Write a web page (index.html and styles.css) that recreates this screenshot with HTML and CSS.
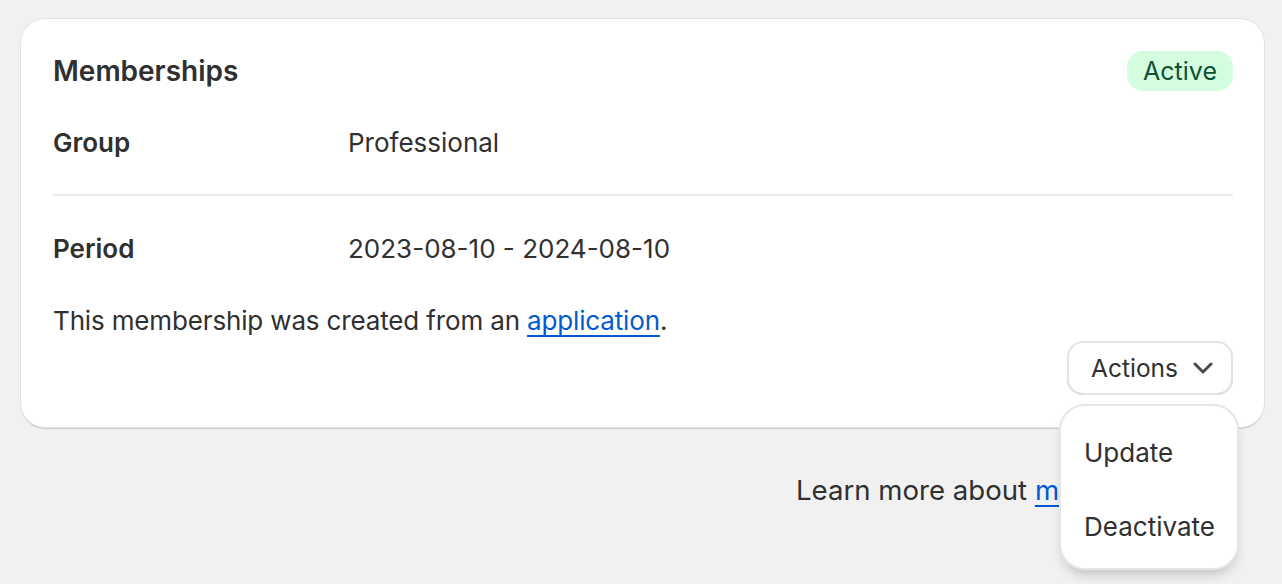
FILE: index.html
```html
<!DOCTYPE html>
<html lang="en">
<head>
<meta charset="utf-8">
<title>Memberships</title>
<link rel="stylesheet" href="styles.css">
</head>
<body>
<div class="page">
  <section class="card">
    <div class="card-header">
      <h2 class="title">Memberships</h2>
      <span class="badge">Active</span>
    </div>
    <div class="row">
      <div class="label">Group</div>
      <div class="value">Professional</div>
    </div>
    <hr class="divider">
    <div class="row">
      <div class="label">Period</div>
      <div class="value">2023-08-10 - 2024-08-10</div>
    </div>
    <p class="note">This membership was created from an <a href="#" class="link">application</a>.</p>
    <div class="actions">
      <div class="menu-wrap">
        <button class="btn" type="button">Actions
          <svg class="chev" width="20" height="12" viewBox="0 0 20 12" aria-hidden="true"><path d="M2 2 L10 10 L18 2" fill="none" stroke="#4a4a4a" stroke-width="3" stroke-linecap="round" stroke-linejoin="round"/></svg>
        </button>
        <div class="popover">
          <div class="item">Update</div>
          <div class="item">Deactivate</div>
        </div>
      </div>
    </div>
  </section>
  <p class="footer">Learn more about <a href="#" class="link">memberships</a></p>
</div>
</body>
</html>
```
FILE: styles.css
```css
* { box-sizing: border-box; }
html, body { margin: 0; padding: 0; }
body {
  background: #f1f1f1;
  font-family: Inter, "Noto Sans", "Liberation Sans", sans-serif;
  color: #303030;
  width: 1282px;
  height: 584px;
  overflow: hidden;
}
.page {
  padding: 19px 18px 0 21px;
}
.card {
  background: #fff;
  border-radius: 24px;
  padding: 32px 31px 32px 32px;
  box-shadow: 0 0 0 1px #e2e2e2, 0 2px 1px 0 rgba(0,0,0,0.16);
  display: flex;
  flex-direction: column;
}
.card-header {
  display: flex;
  justify-content: space-between;
  align-items: center;
  height: 40px;
}
.title {
  margin: 0;
  font-size: 28px;
  font-weight: 600;
  line-height: 40px;
  letter-spacing: 0;
}
.badge {
  background: #d4fde0;
  color: #0c5132;
  font-size: 25px;
  line-height: 40px;
  height: 40px;
  padding: 0 16px;
  border-radius: 16px;
  font-weight: 400;
}
.row {
  display: flex;
  align-items: center;
  margin-top: 32px;
  height: 40px;
  font-size: 26px;
  line-height: 40px;
}
.label {
  width: 295px;
  font-weight: 600;
}
.divider {
  margin: 31px 0 0 0;
  border: 0;
  height: 2px;
  background: #ebebeb;
}
.divider + .row { margin-top: 33px; }
.note {
  margin: 32px 0 0 0;
  font-size: 26px;
  line-height: 40px;
  letter-spacing: -0.15px;
}
.link {
  color: #005bd3;
  text-decoration: underline;
  text-underline-offset: 5px;
  text-decoration-thickness: 2px;
}
.actions {
  display: flex;
  justify-content: flex-end;
  margin-top: 0;
}
.menu-wrap {
  position: relative;
}
.btn {
  font-family: inherit;
  display: flex;
  align-items: center;
  gap: 15px;
  height: 54px;
  padding: 0 20px 0 24px;
  background: #fff;
  border: 0;
  border-radius: 16px;
  font-size: 24.5px;
  font-weight: 400;
  color: #303030;
  box-shadow: 0 0 0 2px #e3e3e3 inset, 0 -2px 0 0 #b5b5b5 inset;
}
.chev { display: block; }
.popover {
  position: absolute;
  top: 65px;
  right: -4px;
  width: 176px;
  background: #fff;
  border-radius: 24px;
  padding: 12px 12px 6px 12px;
  box-shadow: 0 0 0 2px #e6e6e6, 0 8px 12px -2px rgba(26,26,26,0.22);
  display: flex;
  flex-direction: column;
  gap: 4px;
  z-index: 2;
}
.item {
  height: 70px;
  line-height: 70px;
  padding: 0 11px;
  font-size: 26px;
}
.footer {
  margin: 43px 0 0 775px;
  font-size: 27.6px;
  line-height: 40px;
}
```
